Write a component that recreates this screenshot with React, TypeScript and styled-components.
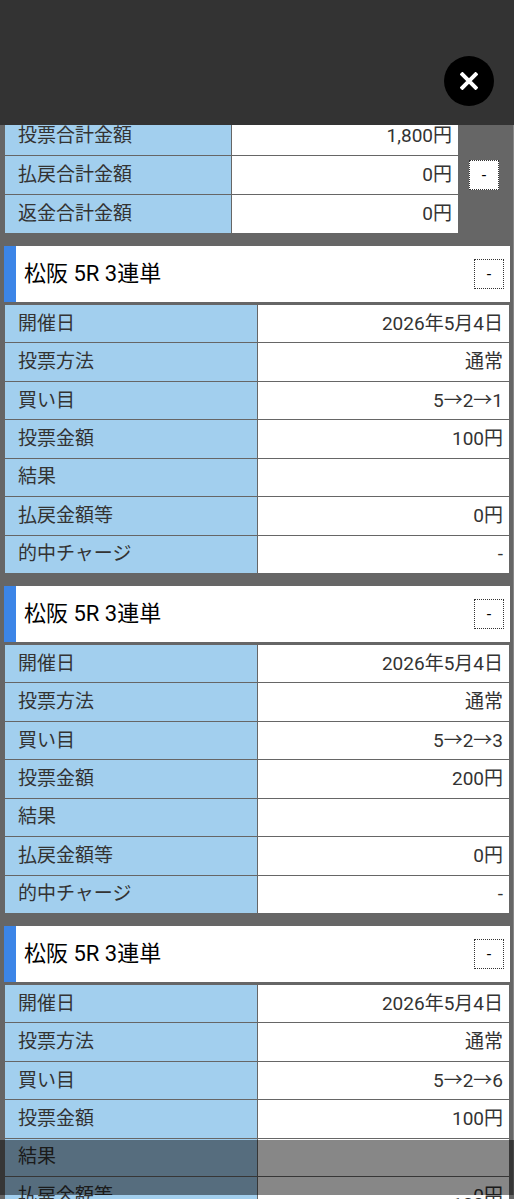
import React from "react";
import styled, { createGlobalStyle } from "styled-components";

const GlobalStyle = createGlobalStyle`
  *, *::before, *::after { box-sizing: border-box; }
  body { margin: 0; background: #666; }
`;

const Screen = styled.div`
  position: relative;
  display: flex;
  flex-direction: column;
  height: 100vh;
  overflow: hidden;
  background: #666;
  color: #333;
  font-family: Roboto, "Noto Sans CJK JP", sans-serif;
  font-size: 19px;
`;

const TopBar = styled.header`
  display: flex;
  flex: none;
  justify-content: flex-end;
  align-items: flex-start;
  height: 125px;
  padding: 56px 20px 0;
  background: #333;
`;

const CloseButton = styled.button`
  display: grid;
  place-items: center;
  width: 50px;
  height: 50px;
  padding: 0;
  border: 0;
  border-radius: 50%;
  background: #000;
`;

const Content = styled.main`
  flex: 1;
  min-height: 0;
  overflow: hidden;
  padding: 0 3px 0 4px;
  border-right: 1px solid #888;
`;

const Summary = styled.section`
  display: flex;
  align-items: center;
  gap: 10px;
  margin-top: -9px;
  padding-right: 11px;
`;

const DetailTable = styled.table<{ $height?: number; $rowHeight: number }>`
  width: 100%;
  height: ${(p) => (p.$height ? `${p.$height}px` : "auto")};
  table-layout: fixed;
  border-collapse: collapse;
  border: 1px solid #666;

  th, td {
    height: ${(p) => p.$rowHeight}px;
    padding: 0 6px 0 13px;
    border: 1px solid #666;
    line-height: 24px;
    font-weight: 400;
  }
  th {
    width: 50%;
    background: #a2cfee;
    text-align: left;
  }
  td {
    background: #fff;
    text-align: right;
  }
`;

const Bet = styled.section`
  margin-top: 12px;
`;

const BetHeader = styled.div`
  display: flex;
  align-items: center;
  justify-content: space-between;
  height: 56px;
  margin-bottom: 2px;
  padding: 0 6px 0 8px;
  border-left: 12px solid #3c85e7;
  background: #fff;
`;

const BetTitle = styled.h2`
  margin: 0;
  color: #000;
  font-size: 22px;
  font-weight: 400;
  line-height: 32px;
`;

const ToggleButton = styled.button`
  flex: none;
  width: 30px;
  height: 30px;
  padding: 0;
  border: 1px dotted #333;
  border-radius: 0;
  background: #fff;
  color: #000;
  font: 16px Roboto, sans-serif;
`;

const NavigationShade = styled.div`
  position: absolute;
  right: 0;
  bottom: 4px;
  left: 0;
  height: 55px;
  background: rgba(0, 0, 0, 0.47);
`;

const BottomEdge = styled.footer`
  flex: none;
  height: 4px;
  overflow: hidden;
  padding: 0 4px;

  table {
    margin-top: -10px;
  }
`;

type Row = [label: string, value: string];

const summaryRows: Row[] = [
  ["投票合計金額", "1,800円"],
  ["払戻合計金額", "0円"],
  ["返金合計金額", "0円"],
];

const bets = [
  { picks: "5→2→1", stake: "100円" },
  { picks: "5→2→3", stake: "200円" },
  { picks: "5→2→6", stake: "100円" },
];

function Rows({ rows }: { rows: Row[] }) {
  return (
    <tbody>
      {rows.map(([label, value]) => (
        <tr key={label}>
          <th scope="row">{label}</th>
          <td>{value}</td>
        </tr>
      ))}
    </tbody>
  );
}

export default function App() {
  return (
    <Screen>
      <GlobalStyle />
      <TopBar>
        <CloseButton aria-label="閉じる">
          <svg width="18" height="18" viewBox="0 0 18 18" fill="none" stroke="#fff" strokeWidth="4">
            <path d="M1 1 17 17M17 1 1 17" />
          </svg>
        </CloseButton>
      </TopBar>
      <Content>
        <Summary>
          <DetailTable $rowHeight={39}>
            <Rows rows={summaryRows} />
          </DetailTable>
          <ToggleButton>-</ToggleButton>
        </Summary>
        {bets.map((bet) => (
          <Bet key={bet.picks}>
            <BetHeader>
              <BetTitle>松阪 5R 3連単</BetTitle>
              <ToggleButton>-</ToggleButton>
            </BetHeader>
            <DetailTable $height={270} $rowHeight={38}>
              <Rows
                rows={[
                  ["開催日", "2026年5月4日"],
                  ["投票方法", "通常"],
                  ["買い目", bet.picks],
                  ["投票金額", bet.stake],
                  ["結果", ""],
                  ["払戻金額等", "0円"],
                  ["的中チャージ", "-"],
                ]}
              />
            </DetailTable>
          </Bet>
        ))}
      </Content>
      <BottomEdge>
        <DetailTable $rowHeight={38}>
          <Rows rows={[["投票金額", "100円"]]} />
        </DetailTable>
      </BottomEdge>
      <NavigationShade />
    </Screen>
  );
}
